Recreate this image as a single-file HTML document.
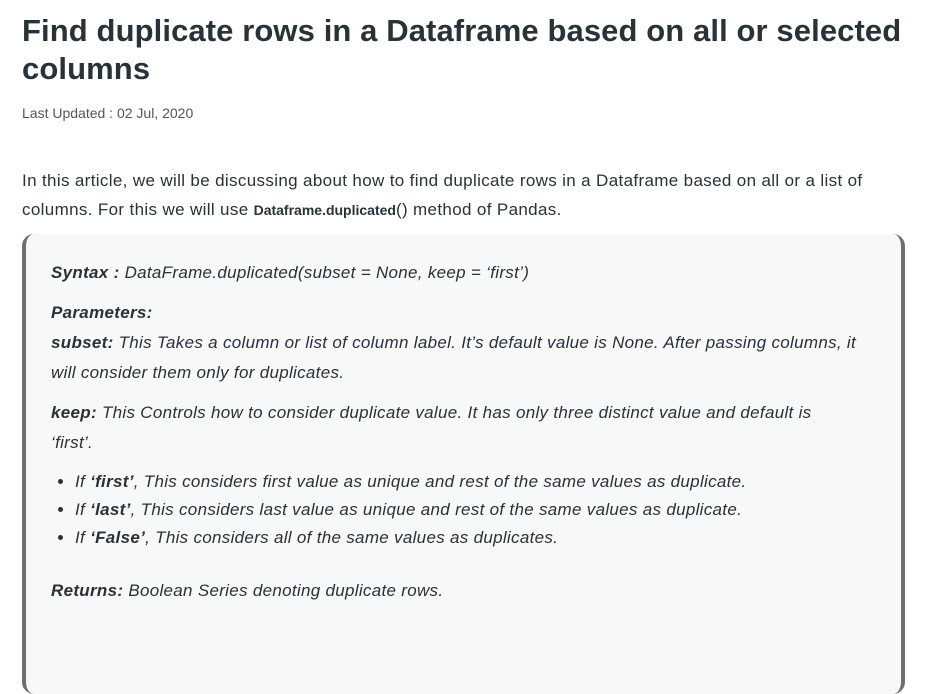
<html><head><style>
body{margin:0;background:#fff;font-family:"Liberation Sans",sans-serif;color:#273239;width:936px;height:633px;overflow:hidden;position:relative}
h1{position:absolute;left:22px;top:12px;margin:0;font-size:31px;line-height:38px;font-weight:bold;width:900px;letter-spacing:0.1px}
.upd{position:absolute;left:22px;top:105px;font-size:14px;color:#555}
.intro{position:absolute;left:22px;top:166px;width:890px;font-size:17px;line-height:29px;letter-spacing:0.35px}
.intro b{font-size:14px;letter-spacing:0}
.box{position:absolute;left:22px;top:234px;width:875px;height:460px;background:#f8f8f8;border-left:4px solid #6f6f6f;border-right:4px solid #6f6f6f;border-radius:12px}
.in{position:absolute;left:25px;width:830px;font-style:italic;font-size:17px;line-height:30px;color:#273239;letter-spacing:0.3px}
ul{margin:0;padding-left:24px}
li{line-height:28px}
</style></head><body>
<h1>Find duplicate rows in a Dataframe based on all or selected columns</h1>
<div class="upd">Last Updated : 02 Jul, 2020</div>
<div class="intro">In this article, we will be discussing about how to find duplicate rows in a Dataframe based on all or a list of columns. For this we will use <b>Dataframe.duplicated</b>() method of Pandas.</div>
<div class="box">
<div class="in" style="top:24px"><b>Syntax :</b> DataFrame.duplicated(subset = None, keep = ‘first’)</div>
<div class="in" style="top:64px"><b>Parameters:</b><br><b>subset:</b> This Takes a column or list of column label. It’s default value is None. After passing columns, it will consider them only for duplicates.</div>
<div class="in" style="top:164px;width:790px"><b>keep:</b> This Controls how to consider duplicate value. It has only three distinct value and default is ‘first’.</div>
<div class="in" style="top:234px"><ul><li>If <b>‘first’</b>, This considers first value as unique and rest of the same values as duplicate.</li><li>If <b>‘last’</b>, This considers last value as unique and rest of the same values as duplicate.</li><li>If <b>‘False’</b>, This considers all of the same values as duplicates.</li></ul></div>
<div class="in" style="top:342px"><b>Returns:</b> Boolean Series denoting duplicate rows.</div>
</div>
</body></html>
